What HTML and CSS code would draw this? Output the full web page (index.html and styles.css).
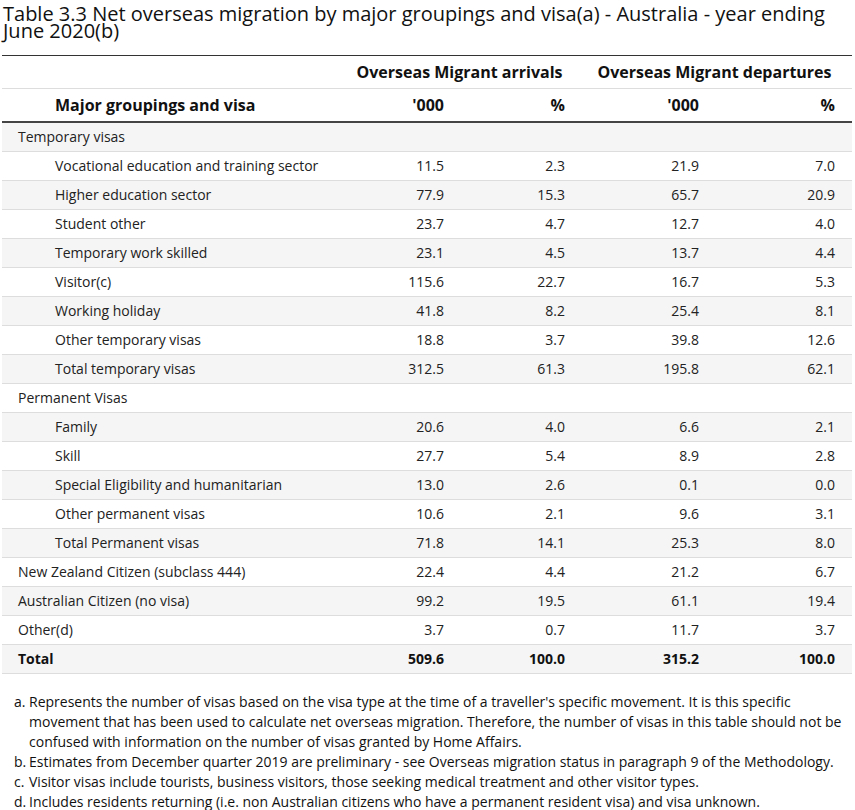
FILE: index.html
```html
<!DOCTYPE html>
<html>
<head>
<meta charset="utf-8">
<link rel="stylesheet" href="styles.css">
</head>
<body>
<div class="page">
  <h1 class="title">Table 3.3 Net overseas migration by major groupings and visa(a) - Australia - year ending June 2020(b)</h1>
  <table class="data">
    <colgroup>
      <col class="c-label"><col class="c-1"><col class="c-2"><col class="c-3"><col class="c-4">
    </colgroup>
    <thead>
      <tr class="group-row">
        <th></th>
        <th colspan="2" class="grp grp-a">Overseas Migrant arrivals</th>
        <th colspan="2" class="grp grp-d">Overseas Migrant departures</th>
      </tr>
      <tr class="sub-row">
        <th class="lbl">Major groupings and visa</th>
        <th class="n1">'000</th>
        <th class="n2">%</th>
        <th class="n3">'000</th>
        <th class="n4">%</th>
      </tr>
    </thead>
    <tbody>
      <tr><td class="top">Temporary visas</td><td></td><td></td><td></td><td></td></tr>
      <tr><td class="ind">Vocational education and training sector</td><td class="n1">11.5</td><td class="n2">2.3</td><td class="n3">21.9</td><td class="n4">7.0</td></tr>
      <tr><td class="ind">Higher education sector</td><td class="n1">77.9</td><td class="n2">15.3</td><td class="n3">65.7</td><td class="n4">20.9</td></tr>
      <tr><td class="ind">Student other</td><td class="n1">23.7</td><td class="n2">4.7</td><td class="n3">12.7</td><td class="n4">4.0</td></tr>
      <tr><td class="ind">Temporary work skilled</td><td class="n1">23.1</td><td class="n2">4.5</td><td class="n3">13.7</td><td class="n4">4.4</td></tr>
      <tr><td class="ind">Visitor(c)</td><td class="n1">115.6</td><td class="n2">22.7</td><td class="n3">16.7</td><td class="n4">5.3</td></tr>
      <tr><td class="ind">Working holiday</td><td class="n1">41.8</td><td class="n2">8.2</td><td class="n3">25.4</td><td class="n4">8.1</td></tr>
      <tr><td class="ind">Other temporary visas</td><td class="n1">18.8</td><td class="n2">3.7</td><td class="n3">39.8</td><td class="n4">12.6</td></tr>
      <tr><td class="ind">Total temporary visas</td><td class="n1">312.5</td><td class="n2">61.3</td><td class="n3">195.8</td><td class="n4">62.1</td></tr>
      <tr><td class="top">Permanent Visas</td><td></td><td></td><td></td><td></td></tr>
      <tr><td class="ind">Family</td><td class="n1">20.6</td><td class="n2">4.0</td><td class="n3">6.6</td><td class="n4">2.1</td></tr>
      <tr><td class="ind">Skill</td><td class="n1">27.7</td><td class="n2">5.4</td><td class="n3">8.9</td><td class="n4">2.8</td></tr>
      <tr><td class="ind">Special Eligibility and humanitarian</td><td class="n1">13.0</td><td class="n2">2.6</td><td class="n3">0.1</td><td class="n4">0.0</td></tr>
      <tr><td class="ind">Other permanent visas</td><td class="n1">10.6</td><td class="n2">2.1</td><td class="n3">9.6</td><td class="n4">3.1</td></tr>
      <tr><td class="ind">Total Permanent visas</td><td class="n1">71.8</td><td class="n2">14.1</td><td class="n3">25.3</td><td class="n4">8.0</td></tr>
      <tr><td class="top">New Zealand Citizen (subclass 444)</td><td class="n1">22.4</td><td class="n2">4.4</td><td class="n3">21.2</td><td class="n4">6.7</td></tr>
      <tr><td class="top">Australian Citizen (no visa)</td><td class="n1">99.2</td><td class="n2">19.5</td><td class="n3">61.1</td><td class="n4">19.4</td></tr>
      <tr><td class="top">Other(d)</td><td class="n1">3.7</td><td class="n2">0.7</td><td class="n3">11.7</td><td class="n4">3.7</td></tr>
      <tr class="total"><td class="top">Total</td><td class="n1">509.6</td><td class="n2">100.0</td><td class="n3">315.2</td><td class="n4">100.0</td></tr>
    </tbody>
  </table>
  <ol class="notes">
    <li><span class="mk">a.</span><span class="tx">Represents the number of visas based on the visa type at the time of a traveller's specific movement. It is this specific movement that has been used to calculate net overseas migration. Therefore, the number of visas in this table should not be confused with information on the number of visas granted by Home Affairs.</span></li>
    <li><span class="mk">b.</span><span class="tx">Estimates from December quarter 2019 are preliminary - see Overseas migration status in paragraph 9 of the Methodology.</span></li>
    <li><span class="mk">c.</span><span class="tx">Visitor visas include tourists, business visitors, those seeking medical treatment and other visitor types.</span></li>
    <li><span class="mk">d.</span><span class="tx">Includes residents returning (i.e. non Australian citizens who have a permanent resident visa) and visa unknown.</span></li>
  </ol>
</div>
</body>
</html>
```

FILE: styles.css
```css
html, body {
  margin: 0;
  padding: 0;
  background: #fff;
}
body {
  font-family: "Open Sans", "Noto Sans", sans-serif;
  color: #222;
}
.page {
  padding: 2px 3px 0 2px;
}
.title {
  margin: 0 0 0 1px;
  font-size: 20px;
  font-weight: normal;
  line-height: 17px;
  padding-top: 3px;
  color: #111;
  width: 845px;
}
.data {
  margin-top: 16px;
  width: 850px;
  border-collapse: collapse;
  table-layout: fixed;
  font-size: 14px;
}
.c-label { width: 340px; }
.c-1 { width: 117px; }
.c-2 { width: 118px; }
.c-3 { width: 137px; }
.c-4 { width: 138px; }
.data th, .data td {
  padding: 0;
  height: 28px;
  vertical-align: middle;
}
.group-row th {
  border-top: 1px solid #333;
  border-bottom: 1px solid #ddd;
  height: 32px;
  font-size: 16px;
  font-weight: bold;
  color: #111;
}
.grp { text-align: center; }
.sub-row th {
  border-bottom: 2px solid #444;
  height: 32px;
  font-size: 16px;
  font-weight: bold;
  color: #111;
}
.sub-row .lbl { text-align: left; padding-left: 53px; }
.data tbody td {
  border-bottom: 1px solid #ddd;
  padding-bottom: 2px;
  height: 26px;
}
.data tbody tr:nth-child(odd) td { background: #f5f5f5; }
.top { padding-left: 16px !important; text-align: left; }
.ind { padding-left: 53px !important; text-align: left; }
.n1 { text-align: right; padding-right: 15px !important; }
.n2 { text-align: right; padding-right: 12px !important; }
.n3 { text-align: right; padding-right: 15px !important; }
.n4 { text-align: right; padding-right: 17px !important; }
.total td { font-weight: bold; color: #111; }
.notes {
  list-style: none;
  margin: 18px 0 0 0;
  padding: 0 0 0 12px;
  font-size: 14px;
  line-height: 20px;
  color: #111;
  width: 835px;
}
.notes li {
  display: flex;
}
.mk {
  width: 15px;
  flex: none;
}
.tx { flex: 1; }
```
